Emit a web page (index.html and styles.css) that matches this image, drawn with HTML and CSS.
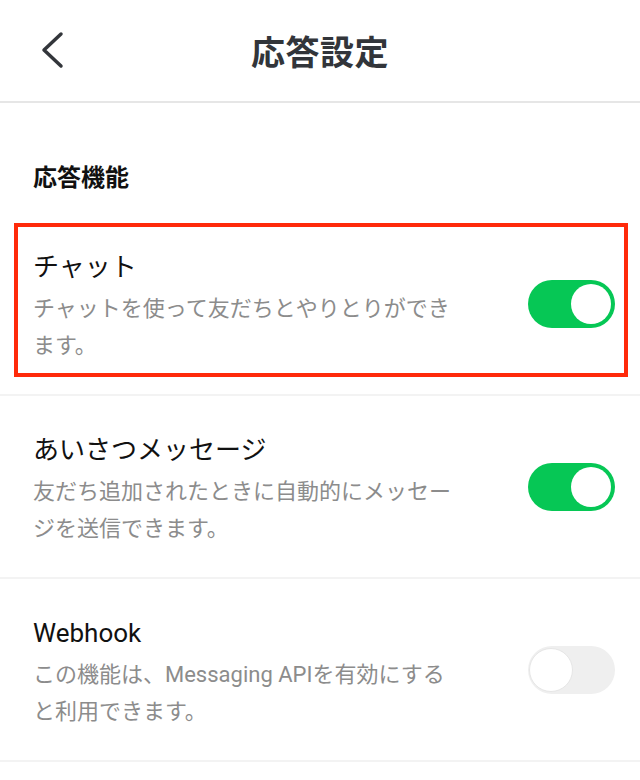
FILE: index.html
```html
<!DOCTYPE html>
<html lang="ja">
<head>
    <meta charset="UTF-8">
    <meta name="viewport" content="width=device-width, initial-scale=1.0">
    <title>応答設定</title>
    <link rel="stylesheet" href="styles.css">
</head>
<body>

    <header class="topbar">
        <a href="#" class="back-button" aria-label="戻る">
            <svg width="30" height="42" viewBox="0 0 30 42">
                <polyline points="23,5 6,21 23,37" fill="none" stroke="#33363b" stroke-width="3.5" stroke-linecap="round" stroke-linejoin="round"/>
            </svg>
        </a>
        <h1>応答設定</h1>
        <span></span>
    </header>

    <div class="section-title">応答機能</div>

    <div class="setting-row highlighted">
        <div class="setting-text">
            <div class="setting-name">チャット</div>
            <div class="setting-desc">チャットを使って友だちとやりとりができます。</div>
        </div>
        <div class="toggle on"><span class="knob"></span></div>
    </div>

    <div class="setting-row">
        <div class="setting-text">
            <div class="setting-name">あいさつメッセージ</div>
            <div class="setting-desc">友だち追加されたときに自動的にメッセージを送信できます。</div>
        </div>
        <div class="toggle on"><span class="knob"></span></div>
    </div>

    <div class="setting-row">
        <div class="setting-text">
            <div class="setting-name">Webhook</div>
            <div class="setting-desc">この機能は、Messaging APIを有効にすると利用できます。</div>
        </div>
        <div class="toggle off"><span class="knob"></span></div>
    </div>

</body>
</html>
```

FILE: styles.css
```css
body {
    margin: 0;
    background-color: #fff;
    font-family: Roboto, "Noto Sans CJK JP", sans-serif;
    color: #111;
}

.topbar {
    display: grid;
    grid-template-columns: 1fr auto 1fr;
    align-items: center;
    height: 101px;
    border-bottom: 2px solid #e6e6e6;
}

.back-button {
    display: flex;
    padding-left: 38px;
    padding-bottom: 2px;
}

.topbar h1 {
    margin: 0;
    font-size: 34px;
    font-weight: bold;
    color: #32353a;
    letter-spacing: 0.5px;
}

.section-title {
    height: 110px;
    box-sizing: border-box;
    padding: 58px 0 0 33px;
    font-size: 24px;
    line-height: 34px;
    font-weight: bold;
}

.setting-row {
    position: relative;
    display: flex;
    align-items: center;
    height: 183px;
    box-sizing: border-box;
    padding: 0 25px 0 33px;
    border-bottom: 2px solid #f3f3f3;
}

/* red annotation frame over the first row */
.setting-row.highlighted::after {
    content: "";
    position: absolute;
    left: 14px;
    right: 12px;
    top: 10px;
    height: 154px;
    box-sizing: border-box;
    border: 4px solid #ff2a0a;
}

.setting-text {
    flex: 1;
    padding-top: 6px;
}

.setting-name {
    font-size: 26px;
    line-height: 36px;
}

.setting-desc {
    max-width: 428px;
    margin-top: 5px;
    font-size: 22px;
    line-height: 37px;
    color: #8c8c8c;
}

.toggle {
    position: relative;
    width: 87px;
    height: 48px;
    border-radius: 24px;
    flex-shrink: 0;
}

.toggle .knob {
    position: absolute;
    top: 4px;
    width: 40px;
    height: 40px;
    border-radius: 50%;
    background-color: #fff;
}

.toggle.on {
    background-color: #06c755;
}

.toggle.on .knob {
    right: 4px;
}

.toggle.off {
    background-color: #efefef;
}

.toggle.off .knob {
    left: 1px;
    top: 2px;
    width: 42px;
    height: 42px;
    border: 1px solid #e6e6e6;
}
```
